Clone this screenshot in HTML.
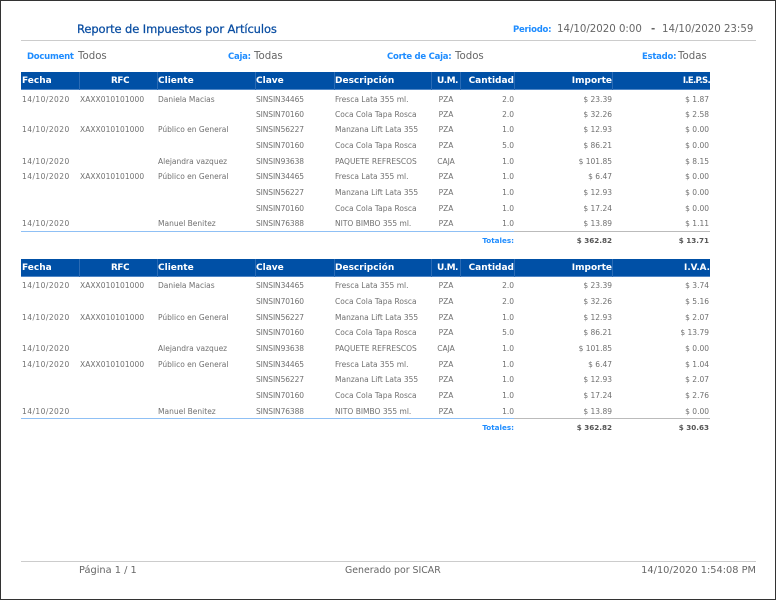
<!DOCTYPE html>
<html lang="es">
<head>
<meta charset="utf-8">
<title>Reporte de Impuestos por Artículos</title>
<style>
html,body{margin:0;padding:0;background:#fff}
body{width:776px;height:600px;position:relative;overflow:hidden;font-family:"DejaVu Sans","Liberation Sans",sans-serif}
#frame{position:absolute;left:0;top:0;width:774px;height:598px;border:1px solid #333}
.l{position:absolute;height:1px}
.t,.r span{position:absolute;white-space:nowrap}
.t{line-height:14px;height:14px;filter:blur(.25px)}
.lab{color:#1e8cff;font-size:8.5px;font-weight:bold;letter-spacing:-.25px}
.val{color:#666;font-size:10.2px}
.hd{position:absolute;left:21px;width:689px;height:18px;background:#0050a6;border-bottom:1px solid #4f86c6;box-sizing:border-box}
.hd i{position:absolute;top:0;width:1px;height:18px;background:#2a6bb5}
.hd span{position:absolute;top:0;line-height:19px;color:#fff;font-size:9px;font-weight:bold;white-space:nowrap;filter:blur(.2px)}
.r{position:absolute;left:0;width:776px;height:14px;line-height:14px;font-size:7.5px;color:#707070;filter:blur(.25px)}
.r span{top:0}
.a{left:22px;letter-spacing:.45px}.b{left:80px;letter-spacing:.05px}.c{left:158px}.d{left:256px;letter-spacing:-.1px}.e{left:335px}
.f{left:426px;width:40px;text-align:center}
.g{right:262px}.h{right:164px}.j{right:67px}
.r .tot{font-weight:bold;color:#555;font-size:7.2px}
.r .tl{color:#1e8cff;font-weight:bold;font-size:7.2px}
.foot{color:#666;font-size:9.8px}
</style>
</head>
<body>
<div id="frame"></div>

<div class="t" style="left:77px;top:22px;font-size:11.5px;color:#0a4ea2;-webkit-text-stroke:.25px #0a4ea2;letter-spacing:-.1px">Reporte de Impuestos por Artículos</div>
<div class="t lab" style="left:513px;top:23px">Periodo:</div>
<div class="t val" style="left:557px;top:23px">14/10/2020 0:00</div>
<div class="t val" style="left:651px;top:23px;font-weight:bold">-</div>
<div class="t val" style="left:662px;top:23px">14/10/2020 23:59</div>
<div class="l" style="left:21px;top:40px;width:735px;background:#ccc"></div>

<div class="t lab" style="left:27px;top:50px">Document</div>
<div class="t val" style="left:78px;top:50px">Todos</div>
<div class="t lab" style="left:228px;top:50px">Caja:</div>
<div class="t val" style="left:254px;top:50px">Todas</div>
<div class="t lab" style="left:387px;top:50px">Corte de Caja:</div>
<div class="t val" style="left:455px;top:50px">Todos</div>
<div class="t lab" style="left:642px;top:50px">Estado:</div>
<div class="t val" style="left:678px;top:50px">Todas</div>

<div class="hd" style="top:72px">
<i style="left:58px"></i><i style="left:136px"></i><i style="left:234px"></i><i style="left:313px"></i><i style="left:410px"></i><i style="left:439px"></i><i style="left:493px"></i><i style="left:591px"></i>
<span style="left:1px">Fecha</span><span style="left:90px;font-size:8.8px;letter-spacing:-.35px">RFC</span><span style="left:137px">Cliente</span><span style="left:235px">Clave</span><span style="left:314px">Descripción</span><span style="left:416px;letter-spacing:-.55px">U.M.</span><span style="right:196px">Cantidad</span><span style="right:98px">Importe</span><span style="right:0;font-size:8.5px;letter-spacing:-.7px">I.E.P.S.</span>
</div>

<div class="r" style="top:93px"><span class="a">14/10/2020</span><span class="b">XAXX010101000</span><span class="c">Daniela Macias</span><span class="d">SINSIN34465</span><span class="e">Fresca Lata 355 ml.</span><span class="f">PZA</span><span class="g">2.0</span><span class="h">$ 23.39</span><span class="j">$ 1.87</span></div>
<div class="r" style="top:108px"><span class="d">SINSIN70160</span><span class="e">Coca Cola Tapa Rosca</span><span class="f">PZA</span><span class="g">2.0</span><span class="h">$ 32.26</span><span class="j">$ 2.58</span></div>
<div class="r" style="top:123px"><span class="a">14/10/2020</span><span class="b">XAXX010101000</span><span class="c">Público en General</span><span class="d">SINSIN56227</span><span class="e">Manzana Lift Lata 355</span><span class="f">PZA</span><span class="g">1.0</span><span class="h">$ 12.93</span><span class="j">$ 0.00</span></div>
<div class="r" style="top:139px"><span class="d">SINSIN70160</span><span class="e">Coca Cola Tapa Rosca</span><span class="f">PZA</span><span class="g">5.0</span><span class="h">$ 86.21</span><span class="j">$ 0.00</span></div>
<div class="r" style="top:155px"><span class="a">14/10/2020</span><span class="c">Alejandra vazquez</span><span class="d">SINSIN93638</span><span class="e">PAQUETE REFRESCOS</span><span class="f">CAJA</span><span class="g">1.0</span><span class="h">$ 101.85</span><span class="j">$ 8.15</span></div>
<div class="r" style="top:170px"><span class="a">14/10/2020</span><span class="b">XAXX010101000</span><span class="c">Público en General</span><span class="d">SINSIN34465</span><span class="e">Fresca Lata 355 ml.</span><span class="f">PZA</span><span class="g">1.0</span><span class="h">$ 6.47</span><span class="j">$ 0.00</span></div>
<div class="r" style="top:186px"><span class="d">SINSIN56227</span><span class="e">Manzana Lift Lata 355</span><span class="f">PZA</span><span class="g">1.0</span><span class="h">$ 12.93</span><span class="j">$ 0.00</span></div>
<div class="r" style="top:202px"><span class="d">SINSIN70160</span><span class="e">Coca Cola Tapa Rosca</span><span class="f">PZA</span><span class="g">1.0</span><span class="h">$ 17.24</span><span class="j">$ 0.00</span></div>
<div class="r" style="top:217px"><span class="a">14/10/2020</span><span class="c">Manuel Benitez</span><span class="d">SINSIN76388</span><span class="e">NITO BIMBO 355 ml.</span><span class="f">PZA</span><span class="g">1.0</span><span class="h">$ 13.89</span><span class="j">$ 1.11</span></div>

<div class="l" style="left:21px;top:231px;width:493px;background:#8fc0f5"></div>
<div class="l" style="left:514px;top:231px;width:196px;background:#bbb"></div>
<div class="r" style="top:234px"><span class="g tl">Totales:</span><span class="h tot">$ 362.82</span><span class="j tot">$ 13.71</span></div>

<div class="hd" style="top:259px">
<i style="left:58px"></i><i style="left:136px"></i><i style="left:234px"></i><i style="left:313px"></i><i style="left:410px"></i><i style="left:439px"></i><i style="left:493px"></i><i style="left:591px"></i>
<span style="left:1px">Fecha</span><span style="left:90px;font-size:8.8px;letter-spacing:-.35px">RFC</span><span style="left:137px">Cliente</span><span style="left:235px">Clave</span><span style="left:314px">Descripción</span><span style="left:416px;letter-spacing:-.55px">U.M.</span><span style="right:196px">Cantidad</span><span style="right:98px">Importe</span><span style="right:0;font-size:8.8px">I.V.A.</span>
</div>

<div class="r" style="top:279px"><span class="a">14/10/2020</span><span class="b">XAXX010101000</span><span class="c">Daniela Macias</span><span class="d">SINSIN34465</span><span class="e">Fresca Lata 355 ml.</span><span class="f">PZA</span><span class="g">2.0</span><span class="h">$ 23.39</span><span class="j">$ 3.74</span></div>
<div class="r" style="top:295px"><span class="d">SINSIN70160</span><span class="e">Coca Cola Tapa Rosca</span><span class="f">PZA</span><span class="g">2.0</span><span class="h">$ 32.26</span><span class="j">$ 5.16</span></div>
<div class="r" style="top:311px"><span class="a">14/10/2020</span><span class="b">XAXX010101000</span><span class="c">Público en General</span><span class="d">SINSIN56227</span><span class="e">Manzana Lift Lata 355</span><span class="f">PZA</span><span class="g">1.0</span><span class="h">$ 12.93</span><span class="j">$ 2.07</span></div>
<div class="r" style="top:326px"><span class="d">SINSIN70160</span><span class="e">Coca Cola Tapa Rosca</span><span class="f">PZA</span><span class="g">5.0</span><span class="h">$ 86.21</span><span class="j">$ 13.79</span></div>
<div class="r" style="top:342px"><span class="a">14/10/2020</span><span class="c">Alejandra vazquez</span><span class="d">SINSIN93638</span><span class="e">PAQUETE REFRESCOS</span><span class="f">CAJA</span><span class="g">1.0</span><span class="h">$ 101.85</span><span class="j">$ 0.00</span></div>
<div class="r" style="top:358px"><span class="a">14/10/2020</span><span class="b">XAXX010101000</span><span class="c">Público en General</span><span class="d">SINSIN34465</span><span class="e">Fresca Lata 355 ml.</span><span class="f">PZA</span><span class="g">1.0</span><span class="h">$ 6.47</span><span class="j">$ 1.04</span></div>
<div class="r" style="top:373px"><span class="d">SINSIN56227</span><span class="e">Manzana Lift Lata 355</span><span class="f">PZA</span><span class="g">1.0</span><span class="h">$ 12.93</span><span class="j">$ 2.07</span></div>
<div class="r" style="top:389px"><span class="d">SINSIN70160</span><span class="e">Coca Cola Tapa Rosca</span><span class="f">PZA</span><span class="g">1.0</span><span class="h">$ 17.24</span><span class="j">$ 2.76</span></div>
<div class="r" style="top:405px"><span class="a">14/10/2020</span><span class="c">Manuel Benitez</span><span class="d">SINSIN76388</span><span class="e">NITO BIMBO 355 ml.</span><span class="f">PZA</span><span class="g">1.0</span><span class="h">$ 13.89</span><span class="j">$ 0.00</span></div>

<div class="l" style="left:21px;top:418px;width:493px;background:#8fc0f5"></div>
<div class="l" style="left:514px;top:418px;width:196px;background:#bbb"></div>
<div class="r" style="top:421px"><span class="g tl">Totales:</span><span class="h tot">$ 362.82</span><span class="j tot">$ 30.63</span></div>

<div class="l" style="left:21px;top:561px;width:735px;background:#ccc"></div>
<div class="t foot" style="left:79px;top:564px">Página 1 / 1</div>
<div class="t foot" style="left:345px;top:564px;font-size:9.4px">Generado por SICAR</div>
<div class="t foot" style="right:20px;top:564px">14/10/2020 1:54:08 PM</div>
</body>
</html>
